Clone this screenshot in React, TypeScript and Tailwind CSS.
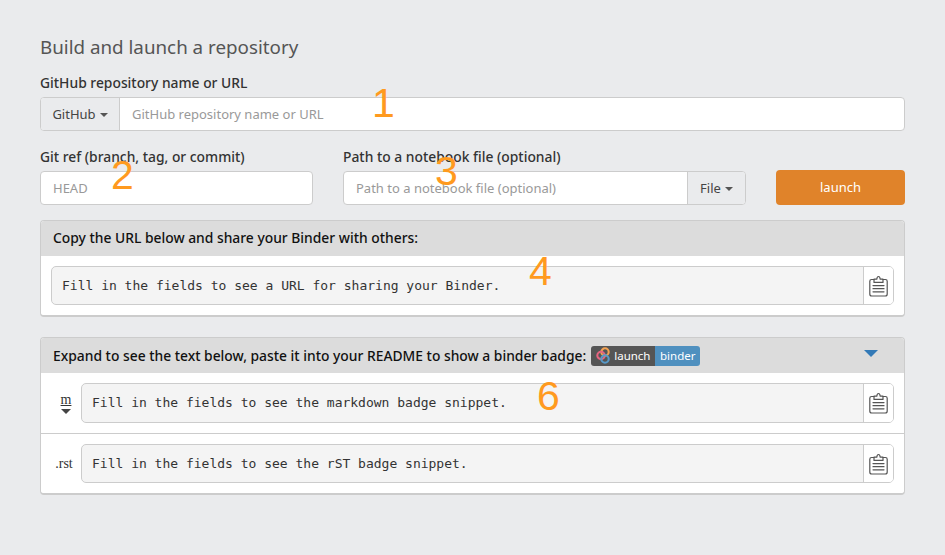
const sans = 'font-["Noto_Sans",sans-serif]';

function Caret({ className = '' }: { className?: string }) {
  return <span className={`inline-block w-0 h-0 border-x-[4px] border-x-transparent border-t-[4px] border-t-[#555] ${className}`} />;
}

function ClipboardIcon() {
  return (
    <svg width="19" height="22" viewBox="0 0 19 22" fill="none" stroke="#555" strokeWidth="1.2" strokeLinejoin="round" strokeLinecap="round">
      <path d="M5 4.5H2.6C1.5 4.5 .8 5.2 .8 6.2V19c0 1.2.7 2 1.9 2h13.6c1.2 0 1.9-.8 1.9-2V6.2c0-1-.7-1.7-1.8-1.7H14" />
      <path d="M5 7.4V4.2h2.8c.2-1.6.8-2.7 1.7-2.7s1.5 1.1 1.7 2.7H14v3.2z" />
      <path d="M4 10.6h11M4 13.7h11M4 16.8h11" />
    </svg>
  );
}

function CopyField({ text, tall = false }: { text: string; tall?: boolean }) {
  return (
    <div className={`flex-1 flex ${tall ? 'h-[40px]' : 'h-[39px]'} border border-[#ccc] rounded-[5px] bg-[#f4f4f4] overflow-hidden`}>
      <div className="flex-1 flex items-center pl-[10px] font-['DejaVu_Sans_Mono',monospace] text-[13px] text-[#333]">{text}</div>
      <div className="w-[30px] bg-white border-l border-[#ccc] flex items-center justify-center">
        <ClipboardIcon />
      </div>
    </div>
  );
}

function Overlay({ n, className }: { n: string; className: string }) {
  return <span className={`absolute text-[#ff9a1f] text-[41px] leading-none font-['Liberation_Sans',sans-serif] ${className}`}>{n}</span>;
}

function BinderLogo() {
  return (
    <svg width="15" height="17" viewBox="0 0 15 17" fill="none" strokeWidth="2.1">
      <circle cx="9" cy="5" r="3.7" stroke="#f5a252" />
      <circle cx="5" cy="8.5" r="3.7" stroke="#e66581" />
      <circle cx="9" cy="12" r="3.7" stroke="#579aca" />
    </svg>
  );
}

export default function App() {
  return (
    <div className={`relative w-[945px] h-[555px] overflow-hidden bg-[#eaebed] pt-[37px] px-[40px] ${sans} text-[14px] text-[#333]`}>
      <h3 className="text-[18.8px] leading-[20px] text-[#555] mb-[16px]">Build and launch a repository</h3>

      <label className="block text-[13.85px] font-medium leading-[20px] mb-[4px]">GitHub repository name or URL</label>
      <div className="flex h-[34px] border border-[#ccc] rounded-[4px] bg-white overflow-hidden text-[13px]">
        <div className="w-[79px] bg-[#eaebed] border-r border-[#ccc] flex items-center justify-center gap-[4px] text-[#444] pt-[1px]">
          GitHub <Caret />
        </div>
        <div className="flex-1 flex items-center pl-[12px] text-[#999] pt-[1px]">GitHub repository name or URL</div>
      </div>

      <div className="flex mt-[16px] items-end">
        <div className="w-[273px]">
          <label className="block text-[13.85px] font-medium leading-[20px] mb-[4px]">Git ref (branch, tag, or commit)</label>
          <div className="h-[34px] border border-[#ccc] rounded-[4px] bg-white flex items-center pl-[12px] pt-[1px] text-[13px] text-[#999]">HEAD</div>
        </div>
        <div className="w-[403px] ml-[30px]">
          <label className="block text-[13.85px] font-medium leading-[20px] mb-[4px]">Path to a notebook file (optional)</label>
          <div className="flex h-[34px] border border-[#ccc] rounded-[4px] bg-white overflow-hidden text-[13px]">
            <div className="flex-1 flex items-center pl-[12px] pt-[1px] text-[#999]">Path to a notebook file (optional)</div>
            <div className="w-[58px] bg-[#eaebed] border-l border-[#ccc] flex items-center justify-center gap-[4px] text-[#444] pt-[1px]">
              File <Caret />
            </div>
          </div>
        </div>
        <button className="w-[129px] h-[35px] ml-[30px] rounded-[4px] bg-[#e0832a] text-white text-[13px]">launch</button>
      </div>

      <div className="mt-[15px] border border-[#ccc] border-b-2 rounded-[4px] bg-white overflow-hidden">
        <div className="h-[35px] bg-[#dcdcdc] flex items-center pl-[12px] text-[13.85px] font-medium text-[#111]">
          Copy the URL below and share your Binder with others:
        </div>
        <div className="flex px-[10px] pt-[10px] pb-[10px]">
          <CopyField text="Fill in the fields to see a URL for sharing your Binder." />
        </div>
      </div>

      <div className="mt-[20px] border border-[#ccc] border-b-2 rounded-[4px] bg-white overflow-hidden">
        <div className="h-[35px] bg-[#dcdcdc] flex items-center pl-[12px] pr-[26px] text-[13.85px] font-medium text-[#111]">
          <span className="pt-[1px]">Expand to see the text below, paste it into your README to show a binder badge:</span>
          <span className="ml-[5px] flex h-[20px] rounded-[3px] overflow-hidden text-[11.5px] font-normal text-white">
            <span className="w-[64px] bg-[#555] flex items-center gap-[3px] pl-[5px]"><BinderLogo />launch</span>
            <span className="w-[45px] bg-[#4f90bf] flex items-center justify-center">binder</span>
          </span>
          <span className="ml-auto -mt-[5px] w-0 h-0 border-x-[7px] border-x-transparent border-t-[7px] border-t-[#337ab7]" />
        </div>
        <div className="flex items-center h-[61px] border-b border-[#ccc] pr-[10px]">
          <div className="w-[40px] pl-[10px] flex flex-col items-center leading-none font-['Liberation_Serif',serif] text-[14px] text-[#333]">
            <span className="underline">m</span>
            <span className="w-0 h-0 border-x-[5px] border-x-transparent border-t-[5px] border-t-[#444] mt-[2px]" />
          </div>
          <CopyField text="Fill in the fields to see the markdown badge snippet." tall />
        </div>
        <div className="flex items-center h-[59px] pr-[10px]">
          <div className="w-[40px] pl-[6px] text-center font-['Liberation_Serif',serif] text-[14px] text-[#333]">.rst</div>
          <CopyField text="Fill in the fields to see the rST badge snippet." />
        </div>
      </div>

      <Overlay n="1" className="left-[372px] top-[83px]" />
      <Overlay n="2" className="left-[111px] top-[155px]" />
      <Overlay n="3" className="left-[435px] top-[151px]" />
      <Overlay n="4" className="left-[529px] top-[251px]" />
      <Overlay n="6" className="left-[537px] top-[376px]" />
    </div>
  );
}
